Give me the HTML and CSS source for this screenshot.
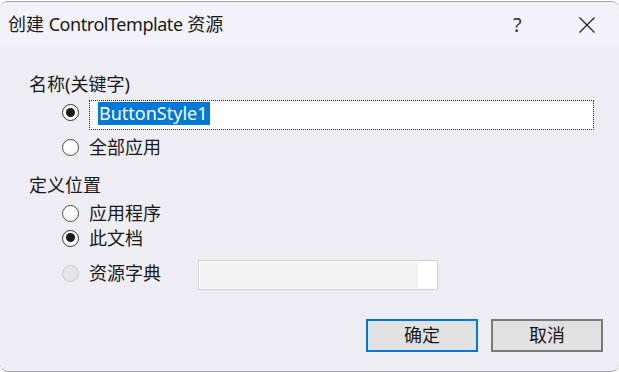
FILE: index.html
```html
<!DOCTYPE html>
<html lang="zh-CN">
<head>
<meta charset="utf-8">
<title>创建 ControlTemplate 资源</title>
<link rel="stylesheet" href="styles.css">
</head>
<body>
<div class="dialog">
  <div class="titlebar">
    <span class="title">创建 <span class="latin">ControlTemplate</span> 资源</span>
    <span class="help">?</span>
    <span class="close"><svg width="16" height="16" viewBox="0 0 16 16"><path d="M0.5 0.5 L15.5 15.5 M15.5 0.5 L0.5 15.5" stroke="#1a1a1a" stroke-width="1.1" fill="none"/></svg></span>
  </div>
  <div class="content">
    <div class="label lbl-name">名称(关键字)</div>
    <div class="row row-input">
      <span class="radio checked"></span>
      <div class="textbox"><span class="sel">ButtonStyle1</span></div>
    </div>
    <div class="row row-all"><span class="radio"></span><span class="text">全部应用</span></div>
    <div class="label lbl-loc">定义位置</div>
    <div class="row row-app"><span class="radio"></span><span class="text">应用程序</span></div>
    <div class="row row-doc"><span class="radio checked"></span><span class="text">此文档</span></div>
    <div class="row row-dict">
      <span class="radio disabled"></span><span class="text dict-text">资源字典</span>
      <div class="combo"><div class="combo-fill"></div></div>
    </div>
    <div class="buttons">
      <button class="btn primary">确定</button>
      <button class="btn">取消</button>
    </div>
  </div>
</div>
</body>
</html>
```
FILE: styles.css
```css
html, body {
  margin: 0;
  padding: 0;
  background: #ffffff;
}
body {
  width: 619px;
  height: 372px;
  overflow: hidden;
  font-family: "Noto Sans", "Noto Sans CJK SC", sans-serif;
  font-size: 18px;
  color: #1a1a1a;
}
.dialog {
  box-sizing: border-box;
  margin-top: 1px;
  height: 371px;
  border-top: 1px solid #a3a3a3;
  border-bottom: 1px solid #a3a3a3;
  border-radius: 8px;
  background: #ededf3;
  overflow: hidden;
  display: flex;
  flex-direction: column;
}
.titlebar {
  height: 45px;
  background: #f2f2f8;
  display: flex;
  align-items: center;
  padding-left: 8px;
}
.title {
  flex: 1;
  line-height: 24px;
  margin-top: -1px;
}
.latin {
  letter-spacing: -0.45px;
}
.help {
  width: 9px;
  margin-right: 57px;
  line-height: 24px;
  font-size: 20px;
  color: #333;
}
.close {
  width: 16px;
  height: 16px;
  margin-right: 24px;
  display: flex;
}
.content {
  flex: 1;
  display: flex;
  flex-direction: column;
  padding-left: 29px;
}
.label {
  height: 24px;
  line-height: 24px;
}
.lbl-name { margin-top: 25px; }
.lbl-loc { margin-top: 14px; }
.row {
  display: flex;
  align-items: center;
  height: 24px;
}
.radio {
  box-sizing: border-box;
  width: 17px;
  height: 17px;
  border: 1px solid #4a4a4a;
  border-radius: 50%;
  background: #fff;
  margin-left: 33px;
  margin-right: 10px;
  position: relative;
  flex: none;
}
.radio.checked { border: 1.5px solid #333; }
.radio.checked::after {
  content: "";
  position: absolute;
  left: 2.5px;
  top: 2.5px;
  width: 9px;
  height: 9px;
  border-radius: 50%;
  background: #1a1a1a;
}
.radio.disabled {
  border-color: #c8c8c8;
  background: #e6e6e9;
}
.text { line-height: 24px; }
.row-input {
  height: 30px;
  margin-top: 4px;
  align-items: flex-start;
}
.row-input .radio { margin-top: 4px; }
.textbox {
  box-sizing: border-box;
  width: 505px;
  height: 30px;
  background: #fff;
  border: 1px dotted #222;
  padding: 1px 0 0 8px;
  display: flex;
  align-items: flex-start;
}
.sel {
  background: #0078d7;
  color: #fff;
  height: 23px;
  line-height: 23px;
  padding: 0 2px 0 1px;
}
.row-all { margin-top: 5px; }
.row-app { margin-top: 4px; }
.row-doc { margin-top: 1px; }
.row-dict {
  height: 30px;
  margin-top: 10px;
}
.row-dict .radio { margin-top: -4px; }
.dict-text {
  width: 109px;
  margin-top: -4px;
}
.combo {
  box-sizing: border-box;
  width: 240px;
  height: 30px;
  border: 1px solid #cfcde0;
  background: #fff;
  padding: 1px 19px 1px 1px;
  display: flex;
}
.combo-fill {
  flex: 1;
  background: #f4f4f4;
}
.buttons {
  display: flex;
  justify-content: flex-end;
  gap: 13px;
  margin-top: 29px;
  padding-right: 16px;
}
.btn {
  box-sizing: border-box;
  width: 112px;
  height: 33px;
  background: #e1e1e1;
  border: 2px solid #7a7a7a;
  font-family: "Noto Sans", "Noto Sans CJK SC", sans-serif;
  font-size: 18px;
  color: #1a1a1a;
  padding: 0;
  line-height: 29px;
}
.btn.primary {
  border-color: #0078d7;
}
```
